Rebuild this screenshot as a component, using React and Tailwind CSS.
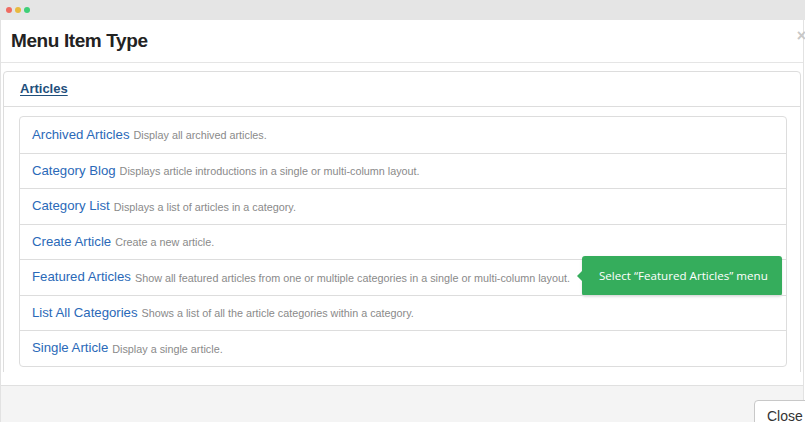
import React from "react";

const items = [
    { title: "Archived Articles", desc: "Display all archived articles." },
    { title: "Category Blog", desc: "Displays article introductions in a single or multi-column layout." },
    { title: "Category List", desc: "Displays a list of articles in a category." },
    { title: "Create Article", desc: "Create a new article." },
    { title: "Featured Articles", desc: "Show all featured articles from one or multiple categories in a single or multi-column layout.", tip: true },
    { title: "List All Categories", desc: "Shows a list of all the article categories within a category." },
    { title: "Single Article", desc: "Display a single article." },
];

export default function App() {
    return (
        <div className="w-[805px] h-[422px] overflow-hidden bg-white relative" style={{ fontFamily: '"Liberation Sans", Arial, sans-serif' }}>
            {/* window bar */}
            <div className="h-[20px] bg-[#e5e5e5] flex items-center gap-[3px] pl-[6px]">
                <span className="w-[6px] h-[6px] rounded-full bg-[#ef6b62]"></span>
                <span className="w-[6px] h-[6px] rounded-full bg-[#e8b93f]"></span>
                <span className="w-[6px] h-[6px] rounded-full bg-[#3fcf78]"></span>
            </div>

            <div className="w-[804px] border-r border-l border-[#e2e2e2]">
                {/* header */}
                <div className="h-[43px] border-b border-[#e5e5e5] flex items-center justify-between pl-[10px] relative">
                    <h1 className="text-[19px] font-bold text-[#222] tracking-[-0.4px]">Menu Item Type</h1>
                    <span className="absolute right-[-3px] top-[4px] text-[16px] font-bold text-[#c8c8c8]">×</span>
                </div>

                {/* body */}
                <div className="h-[309px] overflow-hidden pt-[8px] px-[2px]">
                    <div className="border border-[#dddddd] rounded-t-[4px] h-[400px]">
                        <div className="h-[35px] border-b border-[#dddddd] flex items-center pl-[16px]">
                            <a href="#" className="text-[13px] font-bold text-[#1f4f7c] underline underline-offset-2">Articles</a>
                        </div>
                        <div className="pt-[9px] pl-[15px] pr-[13px]">
                            <ul className="border border-[#dddddd] rounded-[4px]">
                                {items.map((item, i) => (
                                    <li key={i} className={`h-[35.5px] flex items-center pl-[12px] relative ${i > 0 ? "border-t border-[#dddddd]" : ""}`}>
                                        <a href="#" className="text-[13.2px] text-[#2a69b8]">{item.title}</a>
                                        <span className="text-[10.8px] text-[#8a8a8a] ml-[4px] mt-[1px]">{item.desc}</span>
                                        {item.tip && (
                                            <div className="absolute left-[562px] top-[-4px] h-[40px] w-[200px] bg-[#35ad5c] rounded-[3px] flex items-center pl-[17px] shadow-sm">
                                                <span className="absolute left-[-5px] top-[15px] w-0 h-0 border-y-[5px] border-y-transparent border-r-[5px] border-r-[#35ad5c]"></span>
                                                <span className="text-white text-[11.6px] whitespace-nowrap" style={{ fontFamily: '"Open Sans", sans-serif' }}>Select “Featured Articles” menu</span>
                                            </div>
                                        )}
                                    </li>
                                ))}
                            </ul>
                        </div>
                    </div>
                </div>
                <div className="h-[13px]"></div>

                {/* footer */}
                <div className="h-[37px] bg-[#f4f4f4] border-t border-[#e0e0e0] flex justify-end pt-[14px]">
                    <button className="w-[60px] h-[30px] bg-white border border-[#c8c8c8] rounded-[4px] text-[14px] text-[#333] text-left pl-[12px] pt-[2px] -mr-[11px]">Close</button>
                </div>
            </div>
        </div>
    );
}
